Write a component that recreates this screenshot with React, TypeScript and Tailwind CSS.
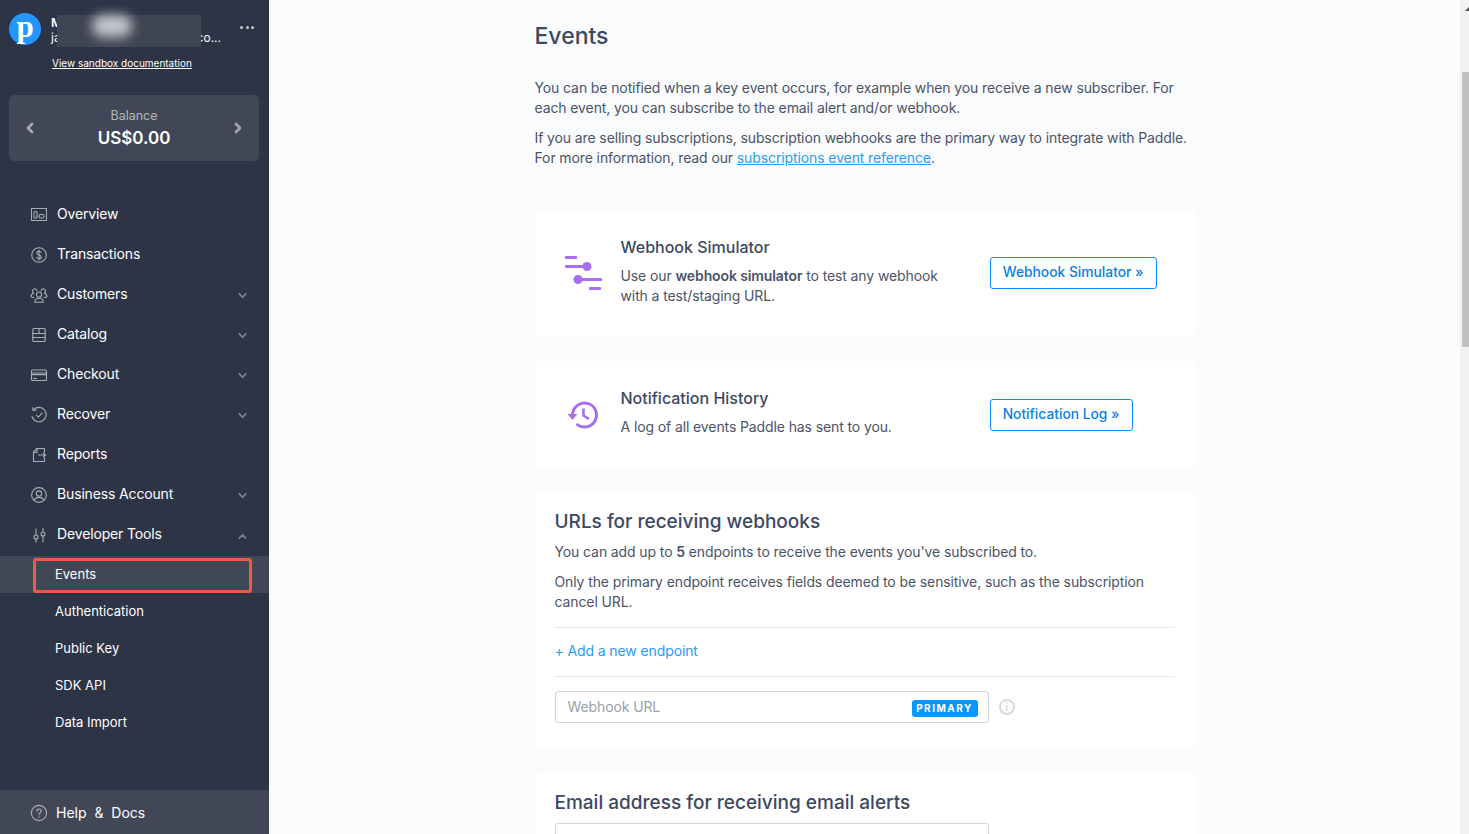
import React from "react";
import { ChevronDown, ChevronUp, ChevronLeft, ChevronRight } from "lucide-react";

const stroke = {
  fill: "none",
  stroke: "#a9adb6",
  strokeWidth: 1.1,
  strokeLinecap: "round" as const,
  strokeLinejoin: "round" as const,
};

const OverviewIcon = () => (
  <svg width="18" height="16" viewBox="0 0 18 16" {...stroke}>
    <rect x="1.5" y="1.5" width="15" height="12" />
    <rect x="4" y="4.5" width="3" height="6.5" rx="1" />
    <rect x="9" y="7.5" width="5" height="3.5" rx="1.5" />
  </svg>
);
const DollarIcon = () => (
  <svg width="18" height="18" viewBox="0 0 18 18" {...stroke}>
    <circle cx="9" cy="9" r="7.3" />
    <path d="M11.2 6.5c-.4-.9-1.2-1.3-2.2-1.3-1.2 0-2.2.7-2.2 1.8 0 2.5 4.5 1.3 4.5 3.9 0 1.1-1 1.9-2.3 1.9-1.1 0-2-.5-2.4-1.4M9 4v10" />
  </svg>
);
const CustomersIcon = () => (
  <svg width="18" height="18" viewBox="0 0 18 18" {...stroke}>
    <circle cx="9" cy="8.6" r="2.6" />
    <path d="M4.8 16.2c0-2.6 1.8-4 4.2-4s4.2 1.4 4.2 4z" />
    <path d="M7 4.6a2.3 2.3 0 1 0-3.4 2.6c-1.5.5-2.6 1.8-2.6 3.3.4.7 1.4 1 2.8 1M11 4.6a2.3 2.3 0 1 1 3.4 2.6c1.5.5 2.6 1.8 2.6 3.3-.4.7-1.4 1-2.8 1" />
  </svg>
);
const CatalogIcon = () => (
  <svg width="18" height="18" viewBox="0 0 18 18" {...stroke}>
    <rect x="2.8" y="2.5" width="12.4" height="13" rx="1" />
    <path d="M2.8 7.5h12.4M2.8 11.5h12.4M9 2.5v5" />
  </svg>
);
const CheckoutIcon = () => (
  <svg width="18" height="16" viewBox="0 0 18 16" {...stroke}>
    <rect x="1.5" y="3" width="15" height="10.5" rx="1" />
    <path d="M1.5 6h15M1.5 7.6h15M3.5 11.5h3" />
  </svg>
);
const RecoverIcon = () => (
  <svg width="18" height="18" viewBox="0 0 18 18" {...stroke}>
    <path d="M3.2 4.2A7.2 7.2 0 1 1 2 10.5" />
    <path d="M2.6 1.6l.6 2.9 2.9-.5M6.4 9l2 2.2 3.6-4" />
  </svg>
);
const ReportsIcon = () => (
  <svg width="18" height="18" viewBox="0 0 18 18" {...stroke}>
    <path d="M14.5 6V2.500H7L3.500 6v9.500h11V12" />
    <path d="M3.500 6.500H7V2.500M8.500 9h7M13.500 7l2 2-2 2" />
  </svg>
);
const AccountIcon = () => (
  <svg width="18" height="18" viewBox="0 0 18 18" {...stroke}>
    <circle cx="9" cy="9" r="7.400" />
    <circle cx="9" cy="7.600" r="2.700" />
    <path d="M4.200 14.400c.7-2 2.600-3 4.800-3s4.100 1 4.800 3" />
  </svg>
);
const ToolsIcon = () => (
  <svg width="18" height="18" viewBox="0 0 18 18" {...stroke}>
    <path d="M6 3v6M6 13v3M13 2.500v3.500M13 10v6" />
    <circle cx="6" cy="11" r="2" />
    <circle cx="13" cy="8" r="2" />
  </svg>
);
const HelpIcon = () => (
  <svg width="18" height="18" viewBox="0 0 18 18" {...stroke}>
    <circle cx="9" cy="9" r="7.600" />
    <path d="M6.800 7.200c0-1.300 1-2.100 2.200-2.100s2.200.8 2.200 2c0 1.700-2.200 1.700-2.200 3.500" />
    <path d="M9 12.800v.4" />
  </svg>
);

const navItems = [
  { label: "Overview", icon: <OverviewIcon /> },
  { label: "Transactions", icon: <DollarIcon /> },
  { label: "Customers", icon: <CustomersIcon />, arrow: "down" },
  { label: "Catalog", icon: <CatalogIcon />, arrow: "down" },
  { label: "Checkout", icon: <CheckoutIcon />, arrow: "down" },
  { label: "Recover", icon: <RecoverIcon />, arrow: "down" },
  { label: "Reports", icon: <ReportsIcon /> },
  { label: "Business Account", icon: <AccountIcon />, arrow: "down" },
  { label: "Developer Tools", icon: <ToolsIcon />, arrow: "up" },
];

const subItems = ["Authentication", "Public Key", "SDK API", "Data Import"];

const Sidebar = () => (
  <aside className="flex h-full w-[269px] shrink-0 flex-col bg-[#2d3446] font-['Inter',sans-serif] text-white">
    <div className="relative px-[9px] pt-[13px]">
      <div className="flex items-start">
        <div className="flex h-8 w-8 shrink-0 items-center justify-center rounded-full bg-[#2496ff] pb-[5px] font-['Liberation_Serif',serif] text-[31px] leading-none font-bold text-white">
          p
        </div>
        <div className="ml-[10px] w-[170px] pt-[2px] text-xs leading-[15px]">
          <div className="font-semibold">M</div>
          <div className="flex justify-between">
            <span>ja</span>
            <span>co...</span>
          </div>
        </div>
        <div className="ml-auto mr-[6px] mt-[13px] flex gap-[2.500px]">
          <span className="h-[3px] w-[3px] rounded-full bg-[#c6c9d0]" />
          <span className="h-[3px] w-[3px] rounded-full bg-[#c6c9d0]" />
          <span className="h-[3px] w-[3px] rounded-full bg-[#c6c9d0]" />
        </div>
      </div>
      {/* redacted name and email */}
      <div className="absolute top-[15px] left-[57px] h-[32px] w-[144px] bg-[#3f4552]" />
      <div className="absolute top-[15px] left-[92px] h-[22px] w-[40px] rounded-full bg-[#c4c7cd] blur-[6px]" />
      <a className="mt-[11px] ml-[43px] block text-[10px] leading-[14px] underline underline-offset-1">
        View sandbox documentation
      </a>
    </div>
    <div className="ml-[9px] mr-[10px] mt-[25px] flex h-[66px] items-center justify-between rounded-[5px] bg-[#414757] px-[13px]">
      <ChevronLeft size={16} strokeWidth={4} className="text-[#a5a8b1]" />
      <div className="text-center">
        <div className="mt-[1px] text-[12.500px] leading-[16px] text-[#b4b7be]">Balance</div>
        <div className="mt-[3px] text-[17px] leading-[22px] font-semibold">US$0.00</div>
      </div>
      <ChevronRight size={16} strokeWidth={4} className="text-[#a5a8b1]" />
    </div>
    <nav className="mt-[32px] flex-1">
      {navItems.map((item) => (
        <div key={item.label} className="flex h-10 items-center pl-[30px] pr-[20px]">
          <span className="flex w-[18px] justify-center pt-[4px]">{item.icon}</span>
          <span className="ml-[9px] flex-1 text-[14px] font-normal tracking-[-0.15px]">{item.label}</span>
          {item.arrow === "down" && <ChevronDown size={13} strokeWidth={3} className="mt-[4px] text-[#7e8390]" />}
          {item.arrow === "up" && <ChevronUp size={13} strokeWidth={3} className="mt-[6px] text-[#7e8390]" />}
        </div>
      ))}
      <div className="relative mt-[3px] flex h-[37px] items-center bg-[#414757] pl-[55px] text-[13px]">
        Events
        <div className="absolute top-[2px] left-[33px] h-[35px] w-[219px] rounded-[3px] border-[3px] border-[#f4574a]" />
      </div>
      {subItems.map((s) => (
        <div key={s} className="flex h-[37px] items-center pl-[55px] text-[13px]">
          {s}
        </div>
      ))}
    </nav>
    <div className="flex h-[44px] items-center bg-[#414757] pl-[30px] text-[14px]">
      <span className="flex w-[18px] justify-center pt-[2px]">
        <HelpIcon />
      </span>
      <span className="ml-[8px] whitespace-pre">Help  &  Docs</span>
    </div>
  </aside>
);

const SimulatorIcon = () => (
  <svg width="38" height="38" viewBox="0 0 38 38" fill="#a76ef0" className="mt-[3px] shrink-0">
    <rect x="0" y="0" width="12" height="3" rx="1" />
    <rect x="0" y="9" width="24" height="3" rx="1" />
    <circle cx="22" cy="10.500" r="4.500" />
    <circle cx="13" cy="23.500" r="4.500" />
    <rect x="13" y="22" width="24" height="3" rx="1" />
    <rect x="24" y="31" width="12" height="3" rx="1" />
  </svg>
);

const HistoryIcon = () => (
  <svg width="32" height="30" viewBox="0 0 32 30" fill="none" stroke="#a76ef0" strokeWidth="3" className="shrink-0">
    <path d="M5.500 15A12 12 0 1 1 9.500 24" />
    <path d="M0.500 14h10l-5 6z" fill="#a76ef0" stroke="none" />
    <path d="M16.500 8.500v7l5.500 3.500" strokeWidth="2.600" />
  </svg>
);

const outlineButton =
  "inline-flex h-8 items-center rounded-[3px] border border-[#0a8cff] bg-white px-3 pb-[1px] text-[13.800px] font-medium tracking-normal text-[#0a7fe8] whitespace-nowrap";

const Main = () => (
  <main className="relative h-full flex-1 overflow-hidden bg-[#fafbfd] font-['Inter',sans-serif] text-[14px] tracking-[-0.11px] text-[#4b5468]">
    <div className="mx-auto box-content w-[660px] pr-[9px]">
      <h1 className="pt-[21px] text-[23px] leading-[30px] font-medium tracking-normal text-[#3d4863]">Events</h1>
      <p className="mt-[27px] leading-[20px]">
        You can be notified when a key event occurs, for example when you receive a new subscriber. For each event, you can subscribe to the email alert and/or webhook.
      </p>
      <p className="mt-[10px] leading-[20px]">
        If you are selling subscriptions, subscription webhooks are the primary way to integrate with Paddle. For more information, read our{" "}
        <a className="text-[#2a9bf8] underline">subscriptions event reference</a>.
      </p>

      <section className="mt-[42px] flex h-[127px] items-center rounded-[5px] bg-white pl-[30px] pr-[38px]">
        <SimulatorIcon />
        <div className="mb-[5px] ml-[18px] flex-1">
          <h2 className="text-[16px] leading-[22px] font-medium tracking-normal text-[#3d4863]">Webhook Simulator</h2>
          <p className="mt-[8px] w-[330px] leading-[20px]">
            Use our <b className="font-semibold">webhook simulator</b> to test any webhook with a test/staging URL.
          </p>
        </div>
        <button className={`${outlineButton} mb-[2px]`}>Webhook Simulator »</button>
      </section>

      <section className="mt-[24px] flex h-[107px] items-center rounded-[5px] bg-white pl-[32px] pr-[62px]">
        <HistoryIcon />
        <div className="mb-[5px] ml-[22px] flex-1">
          <h2 className="text-[16px] leading-[22px] font-medium tracking-normal text-[#3d4863]">Notification History</h2>
          <p className="mt-[8px] leading-[20px]">A log of all events Paddle has sent to you.</p>
        </div>
        <button className={outlineButton}>Notification Log »</button>
      </section>

      <section className="mt-[24px] h-[257px] rounded-[5px] bg-white px-[20px] pt-[17px]">
        <h2 className="text-[19px] leading-[26px] font-medium tracking-normal text-[#3d4863]">URLs for receiving webhooks</h2>
        <p className="mt-[7px] leading-[20px]">
          You can add up to <b className="font-semibold">5</b> endpoints to receive the events you've subscribed to.
        </p>
        <p className="mt-[10px] leading-[20px]">
          Only the primary endpoint receives fields deemed to be sensitive, such as the subscription cancel URL.
        </p>
        <div className="mt-[15px] flex h-[50px] items-center border-y border-[#e8e9ee] pb-[4px] text-[#2a9bf8]">+ Add a new endpoint</div>
        <div className="mt-[14px] flex items-center">
          <div className="flex h-8 w-[434px] items-center justify-between rounded-[3px] border border-[#d3d3de] pl-3 pr-[10px] text-[#9a9fad]">
            <span className="pb-[2px]">Webhook URL</span>
            <span className="mt-[2px] flex h-[17px] w-[66px] items-center justify-center rounded-[3px] bg-[#0a96ff] text-[10px] font-bold tracking-[1.500px] text-white">PRIMARY</span>
          </div>
          <span className="ml-[10px] flex h-4 w-4 items-center justify-center rounded-full border-2 border-[#d7d8e2] text-[10px] font-bold text-[#d7d8e2]">i</span>
        </div>
      </section>

      <section className="mt-[24px] h-[200px] rounded-[5px] bg-white px-[20px] pt-[17px]">
        <h2 className="text-[19px] leading-[26px] font-medium tracking-normal text-[#3d4863]">Email address for receiving email alerts</h2>
        <div className="mt-[7px] h-8 w-[434px] rounded-[3px] border border-[#d3d3de]" />
      </section>
    </div>
    {/* browser scrollbar */}
    <div className="absolute top-0 right-0 h-full w-[9px] overflow-hidden bg-[#f1f1f1]">
      <div className="ml-[5px] mt-[7px] h-0 w-0 border-x-[4px] border-b-[4px] border-x-transparent border-b-[#505050]" />
      <div className="absolute top-[72px] right-0 h-[275px] w-[7px] bg-[#c1c1c1]" />
    </div>
  </main>
);

export default function App() {
  return (
    <div className="flex h-screen w-full overflow-hidden">
      <Sidebar />
      <Main />
    </div>
  );
}
